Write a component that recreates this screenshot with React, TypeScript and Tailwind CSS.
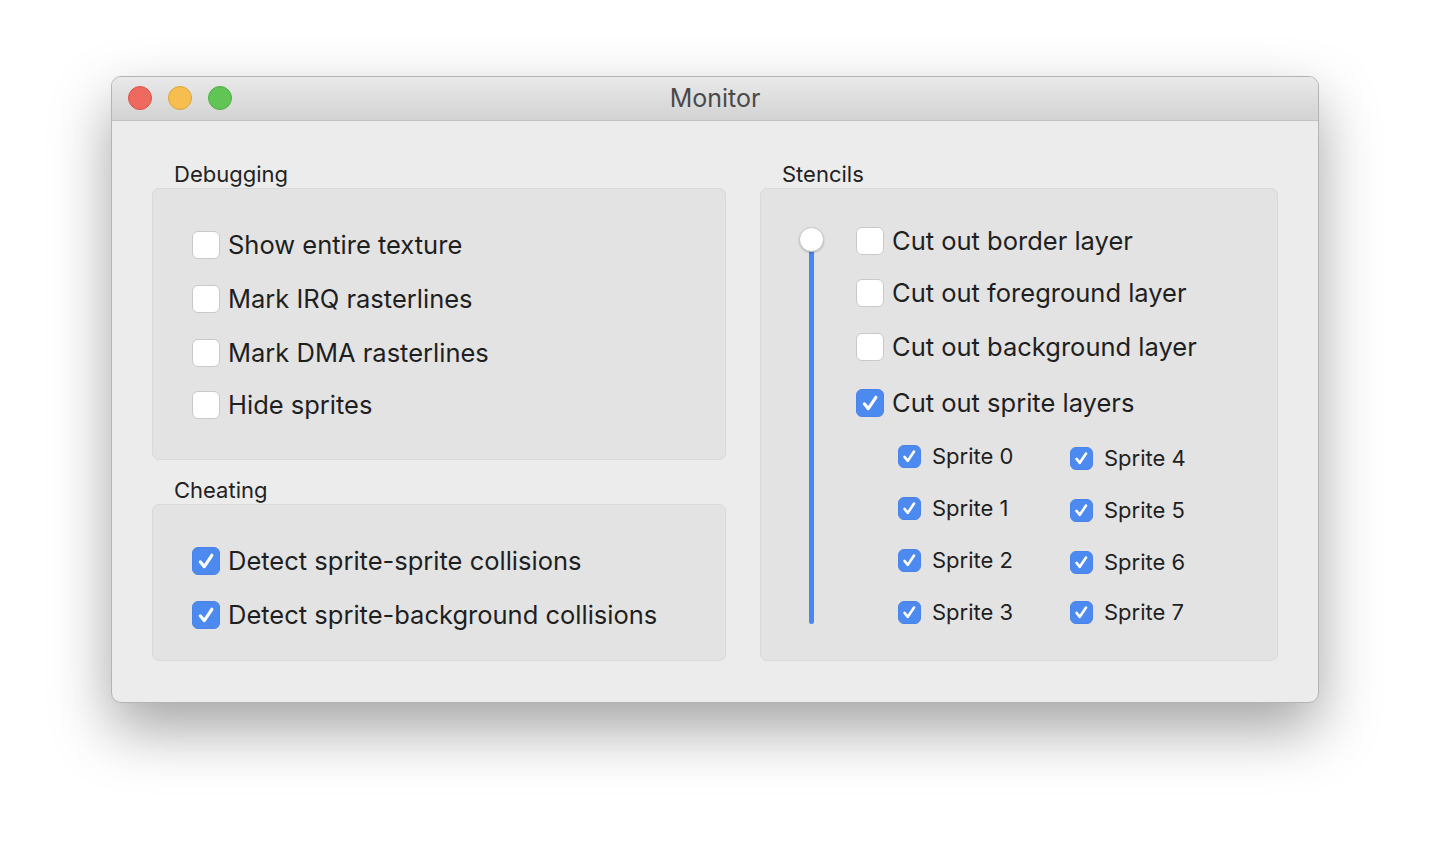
import React from "react";

const Check = ({ checked, size = 28 }: { checked: boolean; size?: number }) => (
  <div
    className={`shrink-0 rounded-[6px] flex items-center justify-center ${
      checked ? "bg-[#4d8af0] border border-[#4a84ea]" : "bg-white border border-[#c9c9c9]"
    }`}
    style={{ width: size, height: size }}
  >
    {checked && (
      <svg width={size * 0.72} height={size * 0.72} viewBox="0 0 16 16" fill="none">
        <path d="M3.4 8.6 L6.6 12.4 L12.6 3.4" stroke="white" strokeWidth="2.5" strokeLinecap="round" strokeLinejoin="round" />
      </svg>
    )}
  </div>
);

const Row = ({ label, checked }: { label: string; checked: boolean }) => (
  <div className="flex items-center gap-[8px] h-[28px]">
    <Check checked={checked} />
    <span className="text-[25.5px] text-[#1f1f1f] leading-none">{label}</span>
  </div>
);

const Small = ({ label }: { label: string }) => (
  <div className="flex items-center gap-[11px] h-[24px]">
    <Check checked size={23} />
    <span className="text-[22px] text-[#1f1f1f] leading-none">{label}</span>
  </div>
);

export default function App() {
  return (
    <div className="w-[1430px] h-[850px] bg-white pt-[76px] pl-[111px]" style={{ fontFamily: "Inter, 'Noto Sans', sans-serif" }}>
      <div className="w-[1208px] h-[627px] rounded-[10px] border border-[#b4b4b4] bg-[#ececec] overflow-hidden shadow-[0_26px_60px_rgba(0,0,0,0.36)]">
        {/* title bar */}
        <div className="relative h-[44px] bg-gradient-to-b from-[#e9e9e9] to-[#d3d3d3] border-b border-[#c2c2c2] flex items-center justify-center">
          <div className="absolute left-[16px] top-[9px] flex gap-[16px]">
            <div className="w-[24px] h-[24px] rounded-full bg-[#ee6a5f] border border-[#d9544a]" />
            <div className="w-[24px] h-[24px] rounded-full bg-[#f5be4f] border border-[#dba53b]" />
            <div className="w-[24px] h-[24px] rounded-full bg-[#61c555] border border-[#4fae44]" />
          </div>
          <span className="text-[25px] text-[#4a4a4a]">Monitor</span>
        </div>
        {/* content */}
        <div className="flex pl-[40px] pt-[42px] gap-[34px]">
          <div className="w-[574px] flex flex-col">
            <div className="pl-[22px] text-[22px] text-[#222] leading-none h-[25px]">Debugging</div>
            <div className="h-[272px] rounded-[7px] bg-[#e3e3e3] border border-[#d9d9d9] pl-[39px] pt-[42px] flex flex-col gap-[26px]">
              <Row label="Show entire texture" checked={false} />
              <Row label="Mark IRQ rasterlines" checked={false} />
              <Row label="Mark DMA rasterlines" checked={false} />
              <div className="-mt-[2px]"><Row label="Hide sprites" checked={false} /></div>
            </div>
            <div className="pl-[22px] text-[22px] text-[#222] leading-none h-[44px] pt-[19px]">Cheating</div>
            <div className="h-[157px] rounded-[7px] bg-[#e3e3e3] border border-[#d9d9d9] pl-[39px] pt-[42px] flex flex-col gap-[26px]">
              <Row label="Detect sprite-sprite collisions" checked />
              <Row label="Detect sprite-background collisions" checked />
            </div>
          </div>
          <div className="w-[518px] flex flex-col">
            <div className="pl-[22px] text-[22px] text-[#222] leading-none h-[25px]">Stencils</div>
            <div className="h-[473px] rounded-[7px] bg-[#e3e3e3] border border-[#d9d9d9] flex pt-[38px] pl-[37px]">
              <div className="relative w-[26px] flex justify-center">
                <div className="absolute top-[12px] w-[5px] h-[385px] rounded-full bg-[#4a86f0]" />
                <div className="absolute top-0 w-[25px] h-[25px] rounded-full bg-white border border-[#c6c6c6] shadow-[0_1px_2px_rgba(0,0,0,0.2)]" />
              </div>
              <div className="ml-[32px] flex flex-col">
                <div className="flex flex-col gap-[24px]">
                  <Row label="Cut out border layer" checked={false} />
                  <Row label="Cut out foreground layer" checked={false} />
                  <div className="mt-[2px]"><Row label="Cut out background layer" checked={false} /></div>
                  <div className="mt-[4px]"><Row label="Cut out sprite layers" checked /></div>
                </div>
                <div className="flex pl-[42px] mt-[27px]">
                  <div className="w-[172px] flex flex-col gap-[28px]">
                    <Small label="Sprite 0" />
                    <Small label="Sprite 1" />
                    <Small label="Sprite 2" />
                    <Small label="Sprite 3" />
                  </div>
                  <div className="flex flex-col gap-[28px] mt-[2px]">
                    <Small label="Sprite 4" />
                    <Small label="Sprite 5" />
                    <Small label="Sprite 6" />
                    <div className="-mt-[2px]"><Small label="Sprite 7" /></div>
                  </div>
                </div>
              </div>
            </div>
          </div>
        </div>
      </div>
    </div>
  );
}
